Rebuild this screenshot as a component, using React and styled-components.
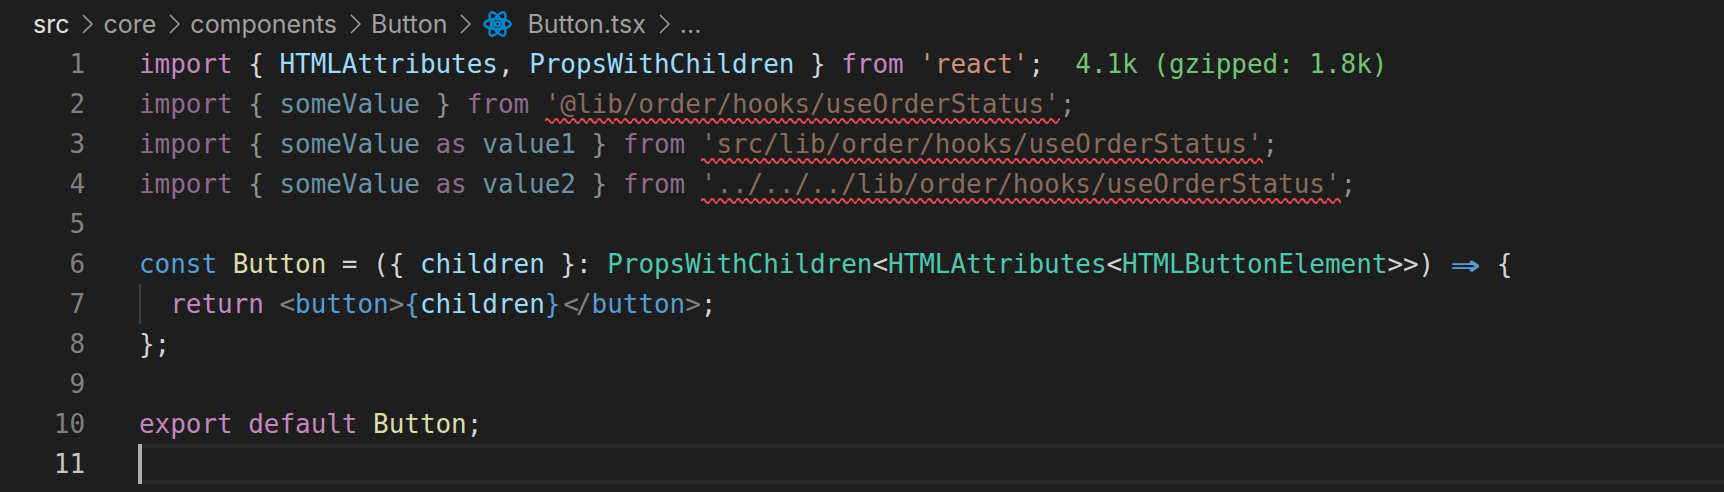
import React from "react";
import styled, { createGlobalStyle } from "styled-components";

const GlobalStyle = createGlobalStyle`
  html, body {
    margin: 0;
    padding: 0;
    background: #1e1e1e;
  }
`;

const Editor = styled.div`
  width: 1724px;
  height: 492px;
  overflow: hidden;
  background: #1e1e1e;
  font-family: "DejaVu Sans Mono", "Liberation Mono", monospace;
  font-size: 26px;
  letter-spacing: -0.05px;
`;

const Breadcrumbs = styled.nav`
  display: flex;
  align-items: center;
  height: 44px;
  padding: 4px 0 0 33px;
  box-sizing: border-box;
  font-family: Inter, "Liberation Sans", sans-serif;
  font-size: 25px;
  letter-spacing: 0;
  color: #a0a0a0;
`;

const Crumb = styled.span`
  color: ${(p) => (p.$active ? "#e0e0e0" : "#a0a0a0")};
`;

const ChevronIcon = styled.svg`
  width: 11px;
  height: 20px;
  margin: 0 10px 0 13px;
  fill: none;
  stroke: #a0a0a0;
  stroke-width: 1.5;
`;

const ReactIcon = styled.svg`
  width: 29px;
  height: 28px;
  margin: 0 15px 0 2px;
  fill: none;
  stroke: #0288d1;
  stroke-width: 2.4;
`;

const Line = styled.div`
  display: flex;
  height: 40px;
  line-height: 40px;
  white-space: pre;
  box-sizing: border-box;
  color: #d4d4d4;
`;

const LineNumber = styled.span`
  flex: none;
  width: 85px;
  margin-right: 54px;
  text-align: right;
  color: ${(p) => (p.$active ? "#c6c6c6" : "#808080")};
`;

const Code = styled.span`
  position: relative;
  flex: 1;
`;

const IndentGuide = styled.span`
  position: absolute;
  left: 0;
  top: 0;
  width: 2px;
  height: 40px;
  background: #404040;
`;

const ActiveCode = styled.span`
  position: relative;
  flex: 1;
  border-top: 4px solid #282828;
  border-bottom: 4px solid #282828;
`;

const Cursor = styled.span`
  position: absolute;
  left: -1px;
  top: -4px;
  width: 4px;
  height: 40px;
  background: #aeaeae;
`;

const Token = styled.span`
  color: ${(p) => p.$c};
`;

const Squiggle = styled.span`
  display: inline-block;
  height: 40px;
  color: #8a6a5b;
  background-image: url("data:image/svg+xml,%3Csvg xmlns='http://www.w3.org/2000/svg' viewBox='0 0 8.7 6'%3E%3Cpath d='M0 3Q2.175-1 4.35 3T8.7 3' fill='none' stroke='%23f14c4c' stroke-width='1.9'/%3E%3C/svg%3E");
  background-size: 8.7px 6px;
  background-position: 0 100%;
  background-repeat: repeat-x;
`;

const Ligature = styled.span`
  display: inline-block;
  width: 2ch;
  text-align: center;
  font-weight: 700;
  color: ${(p) => p.$c};
  transform: scale(1.9, 1.25);
`;

const TagOpen = styled.span`
  color: #808080;
  padding-left: 3px;
  letter-spacing: -3.05px;
`;

const Size = styled.span`
  color: #73c573;
`;

const KW = "#c586c0";
const KW_DIM = "#8f6a8d";
const VAR = "#9cdcfe";
const VAR_DIM = "#6a93a8";
const STR = "#ce9178";
const BRACE_DIM = "#8e8e8e";
const TYPE = "#4ec9b0";
const BLUE = "#569cd6";
const FN = "#dcdcaa";
const GREY = "#808080";

function DimImport({ name, alias, from }) {
  return (
    <>
      <Token $c={KW_DIM}>import</Token>
      <Token $c={BRACE_DIM}> {"{"} </Token>
      <Token $c={VAR_DIM}>{name}</Token>
      {alias && (
        <>
          <Token $c={KW_DIM}> as </Token>
          <Token $c={VAR_DIM}>{alias}</Token>
        </>
      )}
      <Token $c={BRACE_DIM}> {"}"} </Token>
      <Token $c={KW_DIM}>from</Token>
      <Token $c={BRACE_DIM}> </Token>
      <Squiggle>{from}</Squiggle>
      <Token $c={BRACE_DIM}>;</Token>
    </>
  );
}

const rows = [
  <>
    <Token $c={KW}>import</Token> {"{ "}
    <Token $c={VAR}>HTMLAttributes</Token>, <Token $c={VAR}>PropsWithChildren</Token>
    {" } "}
    <Token $c={KW}>from</Token> <Token $c={STR}>'react'</Token>;{"  "}
    <Size>4.1k (gzipped: 1.8k)</Size>
  </>,
  <DimImport name="someValue" from="'@lib/order/hooks/useOrderStatus'" />,
  <DimImport name="someValue" alias="value1" from="'src/lib/order/hooks/useOrderStatus'" />,
  <DimImport name="someValue" alias="value2" from="'../../../lib/order/hooks/useOrderStatus'" />,
  null,
  <>
    <Token $c={BLUE}>const</Token> <Token $c={FN}>Button</Token> = ({"{ "}
    <Token $c={VAR}>children</Token>
    {" }"}: <Token $c={TYPE}>PropsWithChildren</Token>
    {"<"}
    <Token $c={TYPE}>HTMLAttributes</Token>
    {"<"}
    <Token $c={TYPE}>HTMLButtonElement</Token>
    {">>) "}
    <Ligature $c={BLUE}>⇒</Ligature> {"{"}
  </>,
  <>
    <IndentGuide />
    {"  "}
    <Token $c={KW}>return</Token> <Token $c={GREY}>{"<"}</Token>
    <Token $c={BLUE}>button</Token>
    <Token $c={GREY}>{">"}</Token>
    <Token $c={BLUE}>{"{"}</Token>
    <Token $c={VAR}>children</Token>
    <Token $c={BLUE}>{"}"}</Token>
    <TagOpen>{"<"}</TagOpen>
    <Token $c={GREY}>/</Token>
    <Token $c={BLUE}>button</Token>
    <Token $c={GREY}>{">"}</Token>;
  </>,
  <>{"};"}</>,
  null,
  <>
    <Token $c={KW}>export</Token> <Token $c={KW}>default</Token> <Token $c={FN}>Button</Token>;
  </>,
];

function Chevron() {
  return (
    <ChevronIcon viewBox="0 0 11 20">
      <path d="M1 1l9 9-9 9" />
    </ChevronIcon>
  );
}

export default function App() {
  return (
    <>
      <GlobalStyle />
      <Editor>
        <Breadcrumbs>
          <Crumb $active>src</Crumb>
          <Chevron />
          <Crumb>core</Crumb>
          <Chevron />
          <Crumb>components</Crumb>
          <Chevron />
          <Crumb>Button</Crumb>
          <Chevron />
          <ReactIcon viewBox="0 0 29 28">
            <ellipse cx="14.5" cy="14" rx="13.2" ry="5.2" />
            <ellipse cx="14.5" cy="14" rx="13.2" ry="5.2" transform="rotate(60 14.5 14)" />
            <ellipse cx="14.5" cy="14" rx="13.2" ry="5.2" transform="rotate(120 14.5 14)" />
            <circle cx="14.5" cy="14" r="2.4" />
          </ReactIcon>
          <Crumb>Button.tsx</Crumb>
          <Chevron />
          <Crumb>...</Crumb>
        </Breadcrumbs>
        {rows.map((row, i) => (
          <Line key={i}>
            <LineNumber>{i + 1}</LineNumber>
            <Code>{row}</Code>
          </Line>
        ))}
        <Line>
          <LineNumber $active>11</LineNumber>
          <ActiveCode>
            <Cursor />
          </ActiveCode>
        </Line>
      </Editor>
    </>
  );
}
